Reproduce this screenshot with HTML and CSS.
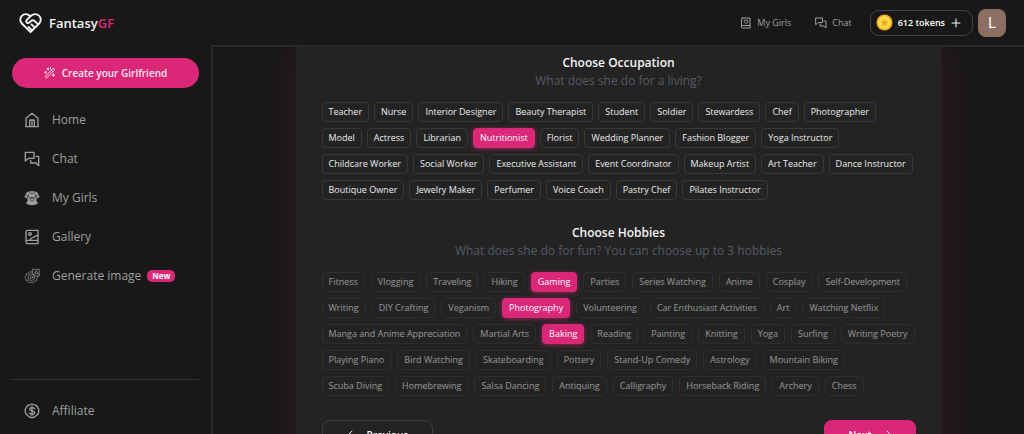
FILE: index.html
```html
<!DOCTYPE html>
<html lang="en">
<head>
<meta charset="utf-8">
<meta name="viewport" content="width=device-width, initial-scale=1">
<title>FantasyGF</title>
<link rel="stylesheet" href="styles.css">
</head>
<body>
<svg class="sprite" aria-hidden="true">
  <symbol id="chat" viewBox="0 0 24 24"><path d="M2 2h13v9H7l-5 4zM18 8h4v14l-4-4h-8v-4"/></symbol>
  <symbol id="wand" viewBox="0 0 24 24"><path d="M2.500 18.500 18.500 2.500l3 3-16 16zM14.500 6.500l3 3M8 2v4M6 4h4M3 9v3M1.500 10.500h3M19 14v5M16.500 16.500h5M13 1v2"/></symbol>
</svg>
<header class="topbar">
  <a class="logo" href="#">
    <svg class="logo-mark" viewBox="0 0 24 22"><path d="M12 20.500 3 11.500A5.600 5.600 0 0 1 3.200 3.300C5.600 1 9.200 1.200 12 4c2.800-2.800 6.400-3 8.800-.700a5.600 5.600 0 0 1 .200 8.200zM12 4 8.200 7.800c-1 1-.800 2.200 0 2.800.900.700 2 .500 2.800-.300l1.800-1.600c1.200-1 2.600-.700 3.600.300l3.600 3.500M13 12.500l3.500 3.500M10 15.200l3.200 3.200"/></svg>
    <span>Fantasy<span class="accent">GF</span></span>
  </a>
  <nav class="topnav">
    <a class="toplink" href="#"><svg class="icon-sm" viewBox="0 0 24 24"><path d="M5 2h15v20H5a2 2 0 0 1-2-2V4a2 2 0 0 1 2-2zM3 19a2 2 0 0 1 2-2h15M12 13 8.500 9.500a2 2 0 0 1 3.500-2.500 2 2 0 0 1 3.500 2.500z"/></svg>My Girls</a>
    <a class="toplink chat-link" href="#"><svg class="icon-sm"><use href="#chat"/></svg>Chat</a>
    <button class="tokens" type="button">
      <svg class="coin" viewBox="0 0 18 18"><circle cx="9" cy="9" r="8.500" fill="#f5a81c"/><circle cx="9" cy="9" r="6.800" fill="#ffdc4a"/><path d="m9 4.800 1.300 2.700 3 .400-2.200 2.100.500 3L9 11.600 6.400 13l.500-3-2.200-2.100 3-.400z" fill="#f2a623"/></svg>
      <span>612 tokens</span>
      <svg class="plus" viewBox="0 0 10 10"><path d="M5 1v8M1 5h8"/></svg>
    </button>
    <button class="avatar" type="button">L</button>
  </nav>
</header>
<div class="layout">
  <aside class="sidebar">
    <a class="create" href="#"><svg class="icon-sm"><use href="#wand"/></svg>Create your Girlfriend</a>
    <nav class="sidenav">
      <a class="sidelink" href="#"><svg class="icon" viewBox="0 0 24 24"><path d="M3 9.500 12 2l9 7.500V22H3zM8.500 22V12h7v10M12 13v9"/></svg>Home</a>
      <a class="sidelink" href="#"><svg class="icon"><use href="#chat"/></svg>Chat</a>
      <a class="sidelink" href="#"><svg class="icon" viewBox="0 0 24 24"><path class="solid" d="M8 2h8c3 .500 5 3 7.500 8.500L19 13l-.500 3 2.500 4c-4 4-14 4-18 0l2.500-4L5 13 .500 10.500C3 5 5 2.500 8 2z"/><path class="cut" d="M8 3c1 3.500 7 3.500 8 0M5.500 12.500l1.500-6M18.500 12.500 17 6.500M8 10.500l4 1.500 4-1.500M12 17l-3-2.800a1.700 1.700 0 0 1 3-1.500 1.700 1.700 0 0 1 3 1.500zM2.500 8l3.500 2M21.500 8 18 10"/></svg>My Girls</a>
      <a class="sidelink" href="#"><svg class="icon" viewBox="0 0 24 24"><path d="M5 2h16v20H5a2 2 0 0 1-2-2V4a2 2 0 0 1 2-2zM3 19a2 2 0 0 1 2-2h16M7 17c4 0 3-4.500 6.500-4.500S16 9.500 20.500 9.500"/><circle cx="9" cy="7.500" r="2"/></svg>Gallery</a>
      <a class="sidelink" href="#"><svg class="icon fine" viewBox="0 0 24 24"><path d="M13 6H8L6.500 8.500 3.500 9 3 12l-2 2 2 2v3l3 .500L8 22l3-.500 3 1 2-2.500 3-1v-3l2-2-1.500-2M13 2h10v10h-7l-3-3zM15.500 10l2-5.500h2l2 5.500M17 8h3.500"/><circle cx="11" cy="14" r="5"/><circle cx="11" cy="14" r="2"/></svg>Generate image<span class="badge">New</span></a>
    </nav>
    <div class="sidefoot">
      <a class="sidelink" href="#"><svg class="icon" viewBox="0 0 24 24"><path d="m12 1.500 3.200 1.300 3.300.900 1.800 3 1.900 2.800L22 13l-.800 3.500-2.700 2.300-2.800 2.200-3.700 1.300L8.300 21l-2.800-2.200-2.700-2.300L2 13l-.200-3.500 1.900-2.800 1.800-3 3.300-.900zM16 8.500C15 6.500 8.500 6.200 8.500 9.300c0 3.200 7.500 1.800 7.500 5.200 0 3-6.500 3-8 .700M12 5v14"/></svg>Affiliate</a>
    </div>
  </aside>
  <main class="content">
    <form class="card">
      <section class="group occupations">
        <h2>Choose Occupation</h2>
        <p>What does she do for a living?</p>
        <div class="chips">
          <div class="row"><button type="button">Teacher</button><button type="button">Nurse</button><button type="button">Interior Designer</button><button type="button">Beauty Therapist</button><button type="button">Student</button><button type="button">Soldier</button><button type="button">Stewardess</button><button type="button">Chef</button><button type="button">Photographer</button></div>
          <div class="row"><button type="button">Model</button><button type="button">Actress</button><button type="button">Librarian</button><button type="button" aria-pressed="true">Nutritionist</button><button type="button">Florist</button><button type="button">Wedding Planner</button><button type="button">Fashion Blogger</button><button type="button">Yoga Instructor</button></div>
          <div class="row"><button type="button">Childcare Worker</button><button type="button">Social Worker</button><button type="button">Executive Assistant</button><button type="button">Event Coordinator</button><button type="button">Makeup Artist</button><button type="button">Art Teacher</button><button type="button">Dance Instructor</button></div>
          <div class="row"><button type="button">Boutique Owner</button><button type="button">Jewelry Maker</button><button type="button">Perfumer</button><button type="button">Voice Coach</button><button type="button">Pastry Chef</button><button type="button">Pilates Instructor</button></div>
        </div>
      </section>
      <section class="group">
        <h2>Choose Hobbies</h2>
        <p>What does she do for fun? You can choose up to 3 hobbies</p>
        <div class="chips">
          <div class="row"><button type="button" disabled>Fitness</button><button type="button" disabled>Vlogging</button><button type="button" disabled>Traveling</button><button type="button" disabled>Hiking</button><button type="button" aria-pressed="true">Gaming</button><button type="button" disabled>Parties</button><button type="button" disabled>Series Watching</button><button type="button" disabled>Anime</button><button type="button" disabled>Cosplay</button><button type="button" disabled>Self-Development</button></div>
          <div class="row"><button type="button" disabled>Writing</button><button type="button" disabled>DIY Crafting</button><button type="button" disabled>Veganism</button><button type="button" aria-pressed="true">Photography</button><button type="button" disabled>Volunteering</button><button type="button" disabled>Car Enthusiast Activities</button><button type="button" disabled>Art</button><button type="button" disabled>Watching Netflix</button></div>
          <div class="row"><button type="button" disabled>Manga and Anime Appreciation</button><button type="button" disabled>Martial Arts</button><button type="button" aria-pressed="true">Baking</button><button type="button" disabled>Reading</button><button type="button" disabled>Painting</button><button type="button" disabled>Knitting</button><button type="button" disabled>Yoga</button><button type="button" disabled>Surfing</button><button type="button" disabled>Writing Poetry</button></div>
          <div class="row"><button type="button" disabled>Playing Piano</button><button type="button" disabled>Bird Watching</button><button type="button" disabled>Skateboarding</button><button type="button" disabled>Pottery</button><button type="button" disabled>Stand-Up Comedy</button><button type="button" disabled>Astrology</button><button type="button" disabled>Mountain Biking</button></div>
          <div class="row"><button type="button" disabled>Scuba Diving</button><button type="button" disabled>Homebrewing</button><button type="button" disabled>Salsa Dancing</button><button type="button" disabled>Antiquing</button><button type="button" disabled>Calligraphy</button><button type="button" disabled>Horseback Riding</button><button type="button" disabled>Archery</button><button type="button" disabled>Chess</button></div>
        </div>
      </section>
      <div class="actions">
        <button class="step previous" type="button"><svg class="arrow" viewBox="0 0 12 12"><path d="M11 6H1M5 2 1 6l4 4"/></svg>Previous</button>
        <button class="step next" type="button">Next<svg class="arrow" viewBox="0 0 12 12"><path d="M1 6h10M7 2l4 4-4 4"/></svg></button>
      </div>
    </form>
  </main>
</div>
</body>
</html>
```
FILE: styles.css
```css
* { box-sizing: border-box; }
body {
  margin: 0;
  height: 100vh;
  overflow: hidden;
  display: flex;
  flex-direction: column;
  background: #181818;
  color: #f5f5f5;
  font-family: "Open Sans", "Liberation Sans", sans-serif;
  font-size: 12px;
  line-height: 18px;
}
a { color: inherit; text-decoration: none; }
button { font: inherit; color: inherit; margin: 0; padding: 0; border: 0; cursor: pointer; }
svg { flex: none; fill: none; stroke: currentColor; stroke-width: 2; stroke-linejoin: round; stroke-linecap: round; }
.sprite { display: none; }
.icon { width: 16px; height: 16px; }
.icon-sm { width: 12px; height: 12px; }
.icon .solid { fill: currentColor; stroke: none; }
.icon .cut { stroke: #181818; stroke-width: 1; }
.icon.fine { stroke-width: 1; }

.topbar {
  flex: none;
  height: 45px;
  padding: 0 18px 0 19px;
  display: flex;
  align-items: center;
  justify-content: space-between;
}
.logo { display: flex; align-items: center; gap: 7px; font-size: 13px; font-weight: 600; }
.logo-mark { width: 23px; height: 22px; }
.accent { color: #db2777; }
.topnav { display: flex; align-items: center; color: #a0a0a0; font-size: 9px; }
.toplink { display: flex; align-items: center; gap: 5px; }
.chat-link { margin: 0 18px 0 24px; }
.tokens {
  display: flex;
  align-items: center;
  gap: 5px;
  height: 26px;
  padding: 0 11px 0 5px;
  border: 1px solid #444;
  border-radius: 9px;
  background: none;
  color: #fff;
  font-weight: 600;
}
.coin { width: 17px; height: 17px; stroke: none; }
.plus { width: 10px; height: 10px; margin-left: 1px; stroke-width: 1; }
.avatar {
  width: 28px;
  height: 28px;
  margin-left: 5px;
  border-radius: 8px;
  background: #8d6e63;
  color: #fff;
  font-family: Roboto, sans-serif;
  font-size: 14px;
}

.layout { flex: 1; min-height: 0; display: flex; }
.sidebar {
  flex: none;
  width: 211px;
  padding: 13px 12px 11px;
  display: flex;
  flex-direction: column;
}
.create {
  height: 30px;
  display: flex;
  align-items: center;
  justify-content: center;
  gap: 6px;
  border-radius: 15px;
  background: #db2777;
  color: #fce7f3;
  font-size: 10px;
  font-weight: 600;
}
.sidenav { display: flex; flex-direction: column; margin-top: 12px; }
.sidelink {
  display: flex;
  align-items: center;
  gap: 12px;
  height: 39px;
  padding-left: 12px;
  color: #9f9f9f;
  font-weight: 500;
}
.badge {
  margin-left: -6px;
  padding: 0 5px;
  border-radius: 5px;
  background: #db2777;
  color: #fff;
  font-size: 8px;
  font-weight: 700;
  line-height: 12px;
}
.sidefoot { margin-top: auto; border-top: 1px solid #343434; }
.sidefoot .sidelink { height: 24px; margin-top: 19px; }

.content {
  flex: 1;
  min-width: 0;
  overflow: hidden;
  border-top: 2px solid #292929;
  border-left: 2px solid #292929;
  border-top-left-radius: 2px;
}
.card {
  max-width: 646px;
  min-height: 100%;
  margin: 0 auto;
  padding: 7px 25px 24px;
  display: flex;
  flex-direction: column;
  gap: 24px;
  background: #232323;
  border: 1px solid #2c2024;
  border-width: 0 1px;
  box-shadow: 0 0 36px rgba(219, 39, 119, .14);
}
.group h2, .group p { margin: 0; text-align: center; font-size: 12px; line-height: 18px; }
.group h2 { font-weight: 600; }
.group p { color: #565a64; }
.chips { display: flex; flex-direction: column; gap: 6px; margin-top: 12px; }
.row { display: flex; flex-wrap: wrap; gap: 6px; }
.occupations .row { column-gap: 5px; }
.chips button {
  height: 20px;
  padding: 0 6px;
  border: 1px solid #383838;
  border-radius: 4px;
  background: none;
  color: #ededed;
  font-size: 9px;
  font-weight: 500;
  line-height: 18px;
  white-space: nowrap;
}
.chips button:disabled { opacity: .55; cursor: default; }
.chips button[aria-pressed="true"] {
  border-color: #db2777;
  background: #db2777;
  color: #fff;
  box-shadow: 0 1px 5px rgba(219, 39, 119, .6);
}
.actions { display: flex; justify-content: space-between; }
.step {
  display: flex;
  align-items: center;
  justify-content: center;
  gap: 8px;
  height: 30px;
  border-radius: 8px;
  font-size: 10px;
  font-weight: 600;
}
.previous { padding: 0 24px; border: 1px solid #404040; background: none; }
.next { padding: 0 24px; background: #db2777; }
.arrow { width: 12px; height: 12px; stroke-width: 1; }
```
